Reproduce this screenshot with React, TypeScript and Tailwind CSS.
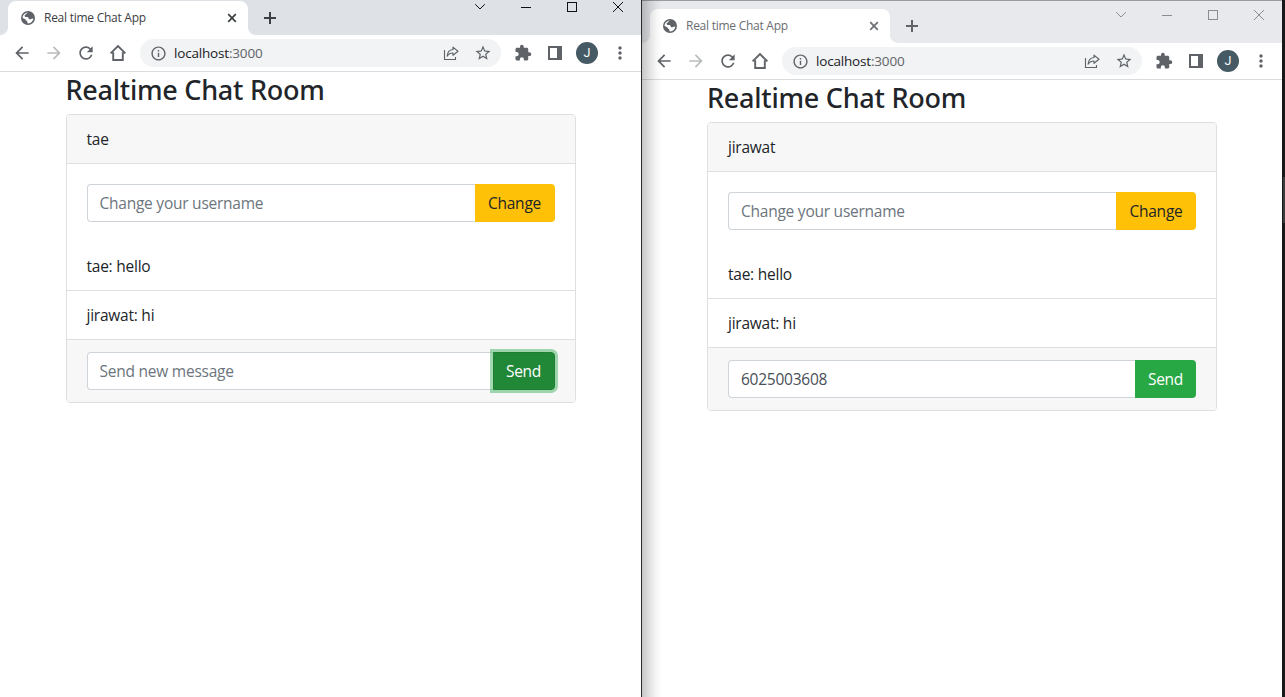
import React from "react";
import { MdArrowBack, MdArrowForward, MdRefresh, MdInfoOutline, MdStarBorder, MdExtension, MdMoreVert } from "react-icons/md";

type WindowProps = {
  focused: boolean;
  user: string;
  draft?: string;
};

const messages = ["tae: hello", "jirawat: hi"];

function Globe() {
  return (
    <svg width="14" height="14" viewBox="0 0 14 14" className="shrink-0">
      <circle cx="7" cy="7" r="7" fill="#5f6368" />
      <path
        d="M7.6 1.5C5.4 1.7 5.7 3.2 4.6 3.5C3.5 3.9 3.2 4.9 4.1 5.7C5 6.1 6 5.6 7 6.2C8 6.7 7.3 8 8.5 8.2C9.7 8.3 10.3 7.2 12.4 7.4C12.1 10 10.1 12.3 7.2 12.5C6 12.2 6.7 10.9 6.1 10.2C5.2 9.6 4.6 9.2 4.3 8.2L1.5 6.9C1.7 3.7 4.2 1.4 7.6 1.5Z"
        fill="#fff"
      />
      <path d="M8 1.6C10.8 2 12.3 4.3 12.4 6.2C11 6.2 10.6 5.6 9.7 6.1C8.4 6 8.9 4.7 7.7 4.4C6.6 4 7.1 2.7 8 1.6Z" fill="#5f6368" />
    </svg>
  );
}

function HomeIcon() {
  return (
    <svg width="18" height="18" viewBox="0 0 18 18" fill="none" stroke="#5f6368" strokeWidth="1.9">
      <path d="M1.6 9.4L9 2.1L16.4 9.4M4.2 8.2V16H13.8V8.2" />
    </svg>
  );
}

function ShareIcon() {
  return (
    <svg width="16" height="16" viewBox="0 0 16 16" fill="none" stroke="#5f6368" strokeWidth="1.1">
      <path d="M1.5 5V14.5H12.5V12" />
      <path d="M10 2.1L15 6.2L10 10.3V8C7.3 8 5.5 9 4.1 11.2C4.4 7.5 6.4 4.9 10 4.5Z" strokeLinejoin="round" />
    </svg>
  );
}

function SidePanelIcon() {
  return (
    <svg width="14" height="14" viewBox="0 0 14 14">
      <path d="M0 0H14V14H0ZM2 2V12H9V2Z" fill="#5f6368" fillRule="evenodd" />
    </svg>
  );
}

function CaptionButtons({ focused }: { focused: boolean }) {
  return (
    <div className={`flex h-[14px] shrink-0 ${focused ? "text-[#111]" : "text-[#8c8d91]"}`}>
      <svg width="184" height="14" viewBox="0 0 184 14" fill="none" stroke="currentColor">
        <path d="M18.2 4.2L23 9L27.8 4.2" />
        <path d="M64 7.5H74" shapeRendering="crispEdges" />
        <path d="M110.5 2.5H119.5V11.5H110.5Z" shapeRendering="crispEdges" />
        <path d="M156 2L166 12M166 2L156 12" />
      </svg>
    </div>
  );
}

function TabStrip({ focused }: { focused: boolean }) {
  const flareLeft = focused
    ? "bg-[radial-gradient(circle_at_0_0,#dee1e6_7.5px,#fff_8.5px)]"
    : "bg-[radial-gradient(circle_at_0_0,#e8e9ed_7.5px,#fff_8.5px)]";
  const flareRight = focused
    ? "bg-[radial-gradient(circle_at_100%_0,#dee1e6_7.5px,#fff_8.5px)]"
    : "bg-[radial-gradient(circle_at_100%_0,#e8e9ed_7.5px,#fff_8.5px)]";
  return (
    <div className={`flex items-start ${focused ? "h-[35px] bg-[#dee1e6]" : "h-[43px] border-t border-[#9c9ca0] bg-[#e8e9ed]"}`}>
      <div className="flex h-full items-end">
        <div className={`size-2 ${flareLeft}`} />
        <div className="flex h-[34px] w-[240px] items-center rounded-t-lg bg-white pl-[13px] pr-[11px]">
          <Globe />
          <span className={`ml-[9px] flex-1 whitespace-nowrap font-['Open_Sans',sans-serif] text-[12px] tracking-[-0.26px] ${focused ? "text-[#3c4043]" : "text-[#6a6d71]"}`}>
            Real time Chat App
          </span>
          <svg width="10" height="10" viewBox="0 0 10 10" fill="none" stroke={focused ? "#3c4043" : "#6a6d71"} strokeWidth="1.7">
            <path d="M1.2 1.2L8.8 8.8M8.8 1.2L1.2 8.8" />
          </svg>
        </div>
        <div className={`size-2 ${flareRight}`} />
        <svg width="28" height="34" viewBox="0 0 28 34" fill="none" stroke={focused ? "#3c4043" : "#5f6368"} strokeWidth="2">
          <path d="M8 17H20M14 11V23" />
        </svg>
      </div>
      <div className={`ml-auto ${focused ? "" : "pt-[7px]"}`}>
        <CaptionButtons focused={focused} />
      </div>
    </div>
  );
}

function Toolbar() {
  return (
    <div className="flex h-[37px] items-center border-b border-[#dadce0] bg-white pl-3 text-[#5f6368]">
      <div className="flex gap-3">
        <MdArrowBack size={20} />
        <MdArrowForward size={20} className="text-[#babcbe]" />
        <MdRefresh size={20} />
        <span className="flex size-5 items-center justify-center">
          <HomeIcon />
        </span>
      </div>
      <div className="ml-3 flex h-7 flex-1 items-center rounded-full bg-[#f1f3f4] pl-[10px] pr-[9px]">
        <MdInfoOutline size={17} />
        <span className="ml-[7px] font-['Open_Sans',sans-serif] text-[13.5px] tracking-[-0.18px] text-[#202124]">
          localhost<span className="text-[#5f6368]">:3000</span>
        </span>
        <span className="ml-auto mr-[15px]">
          <ShareIcon />
        </span>
        <MdStarBorder size={18} />
      </div>
      <div className="flex items-center pl-[13px] pr-[11px]">
        <MdExtension size={18} />
        <span className="ml-4">
          <SidePanelIcon />
        </span>
        <span className="ml-[14px] flex size-[22px] items-center justify-center rounded-full bg-[#455a64] font-[Roboto,sans-serif] text-[12.5px] text-white">J</span>
        <MdMoreVert size={20} className="ml-[12px]" />
      </div>
    </div>
  );
}

const field =
  "h-[38px] min-w-0 flex-1 rounded-l border border-r-0 border-[#ced4da] bg-white px-3 text-[#495057] outline-none placeholder:text-[#6c757d] placeholder:opacity-100";

function ChatRoom({ focused, user, draft }: WindowProps) {
  return (
    <main className="mx-auto w-[510px] font-['Open_Sans',sans-serif] text-[15.5px] leading-6 tracking-[-0.24px] text-[#212529]">
      <h3 className="h-[42px] whitespace-nowrap font-['Noto_Sans','Open_Sans',sans-serif] text-[27px] font-medium leading-[35px] tracking-[-0.25px]">Realtime Chat Room</h3>
      <section className="rounded border border-[#dfdfdf]">
        <header className="rounded-t-[3px] border-b border-[#dfdfdf] bg-[#f7f7f7] px-5 py-3">{user}</header>
        <div className="flex p-5">
          <input className={field} placeholder="Change your username" />
          <button className="h-[38px] w-20 rounded-r bg-[#ffc107] text-center">Change</button>
        </div>
        <ul>
          <li className="border-b border-[#dfdfdf] px-5 py-3">{messages[0]}</li>
          <li className="px-5 py-3">{messages[1]}</li>
        </ul>
        <footer className="flex rounded-b-[3px] border-t border-[#dfdfdf] bg-[#f7f7f7] px-5 py-3">
          <input className={field} placeholder="Send new message" defaultValue={draft} />
          <button
            className={`h-[38px] rounded-r text-center text-white ${
              focused ? "w-[62px] border border-[#1e7e34] bg-[#218838] shadow-[0_0_0_3px_rgba(72,180,97,0.5)]" : "w-[61px] bg-[#28a745]"
            }`}
          >
            Send
          </button>
        </footer>
      </section>
    </main>
  );
}

function BrowserWindow(props: WindowProps) {
  return (
    <div className="h-full bg-white">
      <TabStrip focused={props.focused} />
      <Toolbar />
      <ChatRoom {...props} />
    </div>
  );
}

export default function App() {
  return (
    <div className="flex h-[697px] w-[1285px] overflow-hidden bg-[#181818]">
      <div className="w-[641px] shrink-0">
        <BrowserWindow focused user="tae" />
      </div>
      <div className="w-px shrink-0 bg-[#2b2b2b]" />
      <div className="relative w-[640px] shrink-0">
        <BrowserWindow focused={false} user="jirawat" draft="6025003608" />
        <div className="pointer-events-none absolute inset-y-0 left-0 w-5 bg-[linear-gradient(90deg,rgba(0,0,0,0.22),rgba(0,0,0,0.11)_40%,rgba(0,0,0,0.03)_75%,transparent)]" />
      </div>
      <div className="flex-1 bg-[#181818] pt-[17px]">
        <div className="mt-[160px] ml-px h-[46px] bg-[#3c3c3c]" />
      </div>
    </div>
  );
}
